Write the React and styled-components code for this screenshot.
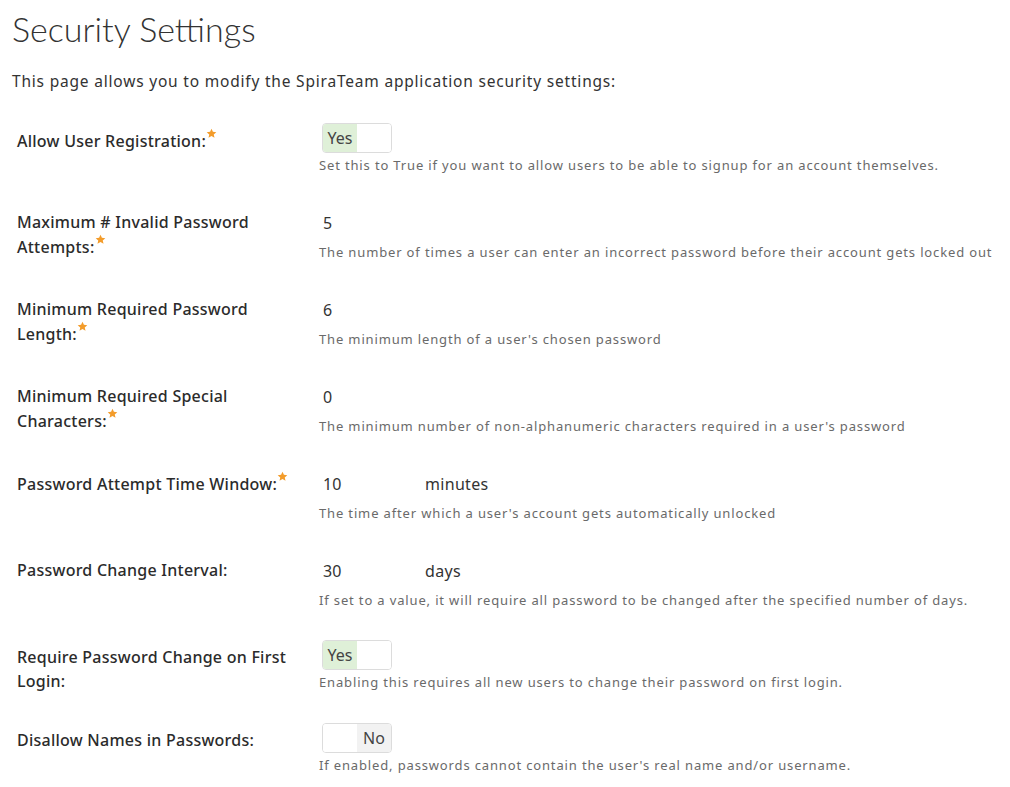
import React from 'react';
import styled, { createGlobalStyle } from 'styled-components';

const GlobalStyle = createGlobalStyle`
  body {
    margin: 0;
    background: #fff;
    font-family: "Noto Sans", "Open Sans", sans-serif;
    color: #333;
  }
`;

const settings = [
  {
    label: 'Allow User Registration:',
    required: true,
    kind: 'toggle',
    value: true,
    help: 'Set this to True if you want to allow users to be able to signup for an account themselves.',
  },
  {
    label: 'Maximum # Invalid Password Attempts:',
    required: true,
    kind: 'text',
    value: '5',
    help: 'The number of times a user can enter an incorrect password before their account gets locked out',
  },
  {
    label: 'Minimum Required Password Length:',
    required: true,
    kind: 'text',
    value: '6',
    help: "The minimum length of a user's chosen password",
  },
  {
    label: 'Minimum Required Special Characters:',
    required: true,
    kind: 'text',
    value: '0',
    help: "The minimum number of non-alphanumeric characters required in a user's password",
  },
  {
    label: 'Password Attempt Time Window:',
    required: true,
    kind: 'text',
    value: '10',
    unit: 'minutes',
    help: "The time after which a user's account gets automatically unlocked",
  },
  {
    label: 'Password Change Interval:',
    kind: 'text',
    value: '30',
    unit: 'days',
    help: 'If set to a value, it will require all password to be changed after the specified number of days.',
  },
  {
    label: 'Require Password Change on First Login:',
    kind: 'toggle',
    value: true,
    help: 'Enabling this requires all new users to change their password on first login.',
  },
  {
    label: 'Disallow Names in Passwords:',
    kind: 'toggle',
    value: false,
    help: "If enabled, passwords cannot contain the user's real name and/or username.",
  },
];

const Star = () => (
  <StarIcon viewBox="0 0 24 24">
    <path d="M12 1.5l3.1 6.9 7.4.7-5.6 5 1.7 7.4L12 17.6l-6.6 3.9 1.7-7.4-5.6-5 7.4-.7z" fill="#f39c2b" />
  </StarIcon>
);

const Toggle = ({ on }) => (
  <ToggleBox>
    <ToggleHalf $active={on} $tone="yes">{on ? 'Yes' : ''}</ToggleHalf>
    <ToggleHalf $active={!on} $tone="no">{on ? '' : 'No'}</ToggleHalf>
  </ToggleBox>
);

const SettingRow = ({ item }) => (
  <Row>
    <Label>
      {item.label}
      {item.required && <Star />}
    </Label>
    <ValueCol>
      {item.kind === 'toggle' ? (
        <Toggle on={item.value} />
      ) : (
        <InputLine>
          <TextValue>{item.value}</TextValue>
          {item.unit && <Unit>{item.unit}</Unit>}
        </InputLine>
      )}
      <Help>{item.help}</Help>
    </ValueCol>
  </Row>
);

export default function App() {
  return (
    <Page>
      <GlobalStyle />
      <Title>Security Settings</Title>
      <Intro>This page allows you to modify the SpiraTeam application security settings:</Intro>
      <Form>
        {settings.map((s) => (
          <SettingRow key={s.label} item={s} />
        ))}
      </Form>
    </Page>
  );
}

const Page = styled.div`
  padding: 7px 12px 20px;
`;

const Title = styled.h1`
  margin: 0;
  font-family: Lato, "Open Sans", sans-serif;
  font-weight: 300;
  font-size: 34px;
  line-height: 44px;
  color: #333;
`;

const Intro = styled.p`
  margin: 19px 0 0;
  font-size: 15.5px;
  line-height: 22px;
  letter-spacing: 0.8px;
  color: #333;
`;

const Form = styled.div`
  display: flex;
  flex-direction: column;
  gap: 30px;
  margin-top: 31px;
  padding-left: 5px;
`;

const Row = styled.div`
  display: grid;
  grid-template-columns: 301px 1fr;
`;

const Label = styled.div`
  padding-top: 5px;
  padding-right: 20px;
  font-size: 16px;
  font-weight: 500;
  line-height: 24px;
  letter-spacing: 0.25px;
  color: #2b2b2b;
`;

const StarIcon = styled.svg`
  width: 11px;
  height: 11px;
  vertical-align: 8px;
  margin-left: 0;
`;

const ValueCol = styled.div`
  display: flex;
  flex-direction: column;
  align-items: flex-start;
`;

const InputLine = styled.div`
  display: flex;
  align-items: center;
  height: 35px;
`;

const TextValue = styled.span`
  width: 102px;
  padding-left: 5px;
  font-size: 16px;
  color: #333;
`;

const Unit = styled.span`
  font-size: 16px;
  letter-spacing: 0.3px;
  color: #333;
`;

const ToggleBox = styled.div`
  display: flex;
  width: 70px;
  height: 30px;
  margin-left: 4px;
  border: 1px solid #dcdcdc;
  border-radius: 4px;
  overflow: hidden;
  box-sizing: border-box;
`;

const ToggleHalf = styled.div`
  flex: 1;
  display: flex;
  align-items: center;
  justify-content: center;
  font-size: 16px;
  color: #444;
  background: ${(p) =>
    p.$active ? (p.$tone === 'yes' ? '#dff0d8' : '#f2f2f2') : '#fff'};
`;

const Help = styled.div`
  margin-top: 2px;
  padding-left: 1px;
  font-size: 13px;
  line-height: 20px;
  letter-spacing: 0.85px;
  color: #6a6a6a;
`;
